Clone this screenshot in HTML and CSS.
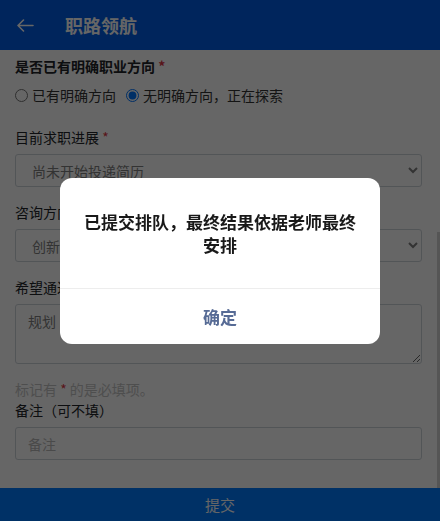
FILE: index.html
```html
<!DOCTYPE html>
<html lang="zh-CN">
<head>
  <meta charset="UTF-8" />
  <meta name="viewport" content="width=device-width, initial-scale=1.0"/>
  <title>职路领航</title>
  <link rel="stylesheet" href="styles.css">
</head>
<body>
  <div class="topbar">
    <svg class="back" width="17" height="13" viewBox="0 0 17 13">
      <path d="M1 6.5 H16 M6.5 1 L1 6.5 L6.5 12" fill="none" stroke="#fff" stroke-width="1.6" stroke-linecap="round" stroke-linejoin="round"/>
    </svg>
    <h1 class="title">职路领航</h1>
  </div>

  <div class="page">
    <form class="form">
      <div class="group group-radio">
        <div class="label label-strong">是否已有明确职业方向 <span class="req">*</span></div>
        <div class="radio-row">
          <label class="radio"><input type="radio" name="dir"> 已有明确方向</label>
          <label class="radio"><input type="radio" name="dir" checked> 无明确方向，正在探索</label>
        </div>
      </div>

      <div class="group">
        <div class="label">目前求职进展 <span class="req">*</span></div>
        <select class="control">
          <option>尚未开始投递简历</option>
        </select>
      </div>

      <div class="group">
        <div class="label">咨询方向 <span class="req">*</span></div>
        <select class="control">
          <option>创新创业</option>
        </select>
      </div>

      <div class="group">
        <div class="label">希望通过咨询解决的问题 <span class="req">*</span></div>
        <textarea class="control area" placeholder="规划"></textarea>
      </div>

      <p class="note">标记有 <span class="req">*</span> 的是必填项。</p>
      <div class="label">备注（可不填）</div>
      <input class="control" type="text" placeholder="备注">
    </form>
    <div class="scroll-track">
      <div class="scroll-thumb"></div>
    </div>
  </div>

  <button class="submit">提交</button>

  <div class="mask"></div>
  <div class="dialog">
    <div class="dialog-body">已提交排队，最终结果依据老师最终安排</div>
    <div class="dialog-foot">
      <a class="dialog-btn">确定</a>
    </div>
  </div>
</body>
</html>
```

FILE: styles.css
```css
body {
  margin: 0;
  height: 100vh;
  overflow: hidden;
  display: flex;
  flex-direction: column;
  font-family: "Noto Sans CJK SC", "Noto Sans", sans-serif;
  font-size: 14px;
  line-height: 1.5;
  color: #212529;
  background: #fff;
}

.topbar {
  height: 50px;
  flex-shrink: 0;
  display: flex;
  align-items: center;
  padding-left: 17px;
  background-color: #005ce6;
}

.back {
  display: block;
}

.title {
  margin: 0 0 0 31px;
  font-size: 18px;
  font-weight: bold;
  color: #fff;
  line-height: 1;
}

.page {
  flex: 1;
  display: flex;
  min-height: 0;
}

.form {
  flex: 1;
  padding: 6px 15px 0;
}

.scroll-track {
  width: 3px;
  display: flex;
  flex-direction: column;
  justify-content: flex-end;
}

.scroll-thumb {
  height: 256px;
  background: #d4d4d4;
}

.group {
  margin-bottom: 15px;
}

.group-radio {
  margin-bottom: 21px;
}

.label {
  margin-bottom: 6px;
}

.label-strong {
  font-weight: bold;
  margin-bottom: 0;
}

.req {
  color: #dc3545;
}

.radio-row {
  display: flex;
  gap: 10px;
  margin-top: 7px;
  height: 22px;
  align-items: center;
}

.radio {
  display: flex;
  align-items: center;
  gap: 4px;
  color: #333;
}

.radio input {
  margin: 0;
  width: 13px;
  height: 13px;
}

.control {
  display: block;
  width: 100%;
  box-sizing: border-box;
  height: 33px;
  padding: 0 12px;
  font-family: inherit;
  font-size: 14px;
  color: #808080;
  background-color: #fff;
  border: 1px solid #ced4da;
  border-radius: 3px;
}

.control::placeholder {
  color: #b8b8b8;
}

.area {
  height: 60px;
  padding: 6px 12px;
  line-height: 21px;
}

.area::placeholder {
  color: #808080;
}

.note {
  margin: 0;
  color: #c4c4c4;
}

.submit {
  height: 33px;
  flex-shrink: 0;
  border: none;
  padding: 0;
  background-color: #007bff;
  color: #fff;
  font-family: inherit;
  font-size: 15px;
}

.mask {
  position: fixed;
  inset: 0;
  background: rgba(0, 0, 0, 0.6);
}

.dialog {
  position: fixed;
  top: 50%;
  left: 50%;
  width: 320px;
  transform: translate(-50%, -50%);
  background: #fff;
  border-radius: 12px;
  overflow: hidden;
  text-align: center;
}

.dialog-body {
  padding: 32px 24px 0;
  margin-bottom: 32px;
  font-size: 17px;
  line-height: 23px;
  font-weight: bold;
  color: rgba(0, 0, 0, 0.9);
}

.dialog-foot {
  border-top: 1px solid rgba(0, 0, 0, 0.07);
  display: flex;
}

.dialog-btn {
  flex: 1;
  line-height: 55px;
  font-size: 17px;
  font-weight: bold;
  color: #576b95;
}
```
